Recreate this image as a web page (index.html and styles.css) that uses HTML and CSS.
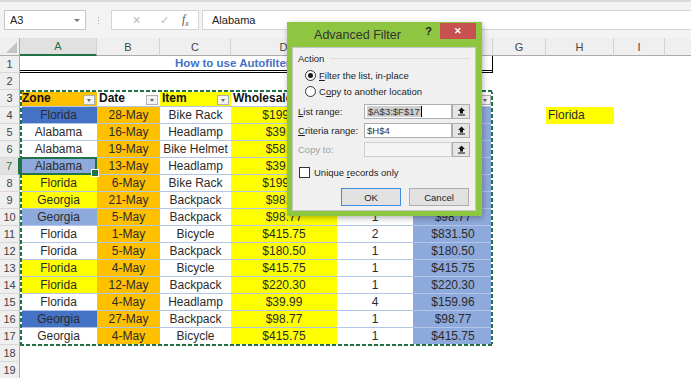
FILE: index.html
```html
<!DOCTYPE html>
<html lang="en">
<head>
    <meta charset="UTF-8">
    <title>Advanced Filter</title>
    <link rel="stylesheet" href="styles.css">
</head>
<body>
    <div class="excel">
        <div class="top-edge"></div>

        <!-- formula bar -->
        <div class="formula-bar">
            <div class="name-box"><span>A3</span><i class="name-arrow"></i></div>
            <div class="grip"><i></i><i></i><i></i></div>
            <div class="fx-box">
                <span class="fx-icon">&#x2715;</span>
                <span class="fx-icon">&#x2713;</span>
                <span class="fx-label"><i>f</i><sub>x</sub></span>
            </div>
            <div class="formula-input">Alabama</div>
        </div>

        <!-- sheet -->
        <div class="sheet">
            <div class="ch corner"></div>
            <div class="ch selected">A</div>
            <div class="ch">B</div>
            <div class="ch">C</div>
            <div class="ch">D</div>
            <div class="ch">E</div>
            <div class="ch">F</div>
            <div class="ch">G</div>
            <div class="ch">H</div>
            <div class="ch">I</div>
            <div class="ch"></div>

            <div class="rh">1</div>
            <div class="title">How to use Autofilter in Excel</div>

            <div class="rh">2</div>

            <div class="rh">3</div>
            <div class="c hdr orange"><span>Zone</span><i class="dd"></i></div>
            <div class="c hdr"><span>Date</span><i class="dd"></i></div>
            <div class="c hdr yellow"><span>Item</span><i class="dd"></i></div>
            <div class="c hdr"><span>Wholesale Price</span><i class="dd"></i></div>
            <div class="c hdr"><span>Quantity</span><i class="dd"></i></div>
            <div class="c hdr"><span>Total</span><i class="dd"></i></div>

            <div class="rh">4</div>
            <div class="c dark-blue">Florida</div>
            <div class="c orange">28-May</div>
            <div class="c">Bike Rack</div>
            <div class="c yellow">$199.99</div>
            <div class="c">1</div>
            <div class="c light-blue">$199.99</div>
            <div class="criteria">Florida</div>

            <div class="rh">5</div>
            <div class="c">Alabama</div>
            <div class="c orange">16-May</div>
            <div class="c">Headlamp</div>
            <div class="c yellow">$39.99</div>
            <div class="c">1</div>
            <div class="c light-blue">$39.99</div>

            <div class="rh">6</div>
            <div class="c">Alabama</div>
            <div class="c orange">19-May</div>
            <div class="c">Bike Helmet</div>
            <div class="c yellow">$58.99</div>
            <div class="c">1</div>
            <div class="c light-blue">$58.99</div>

            <div class="rh selected">7</div>
            <div class="c light-blue">Alabama</div>
            <div class="c orange">13-May</div>
            <div class="c">Headlamp</div>
            <div class="c yellow">$39.99</div>
            <div class="c">1</div>
            <div class="c light-blue">$39.99</div>

            <div class="rh">8</div>
            <div class="c yellow">Florida</div>
            <div class="c orange">6-May</div>
            <div class="c">Bike Rack</div>
            <div class="c yellow">$199.99</div>
            <div class="c">1</div>
            <div class="c light-blue">$199.99</div>

            <div class="rh">9</div>
            <div class="c yellow">Georgia</div>
            <div class="c orange">21-May</div>
            <div class="c">Backpack</div>
            <div class="c yellow">$98.77</div>
            <div class="c">1</div>
            <div class="c light-blue">$98.77</div>

            <div class="rh">10</div>
            <div class="c light-blue">Georgia</div>
            <div class="c orange">5-May</div>
            <div class="c">Backpack</div>
            <div class="c yellow">$98.77</div>
            <div class="c">1</div>
            <div class="c light-blue">$98.77</div>

            <div class="rh">11</div>
            <div class="c">Florida</div>
            <div class="c orange">1-May</div>
            <div class="c">Bicycle</div>
            <div class="c yellow">$415.75</div>
            <div class="c">2</div>
            <div class="c light-blue">$831.50</div>

            <div class="rh">12</div>
            <div class="c">Florida</div>
            <div class="c orange">5-May</div>
            <div class="c">Backpack</div>
            <div class="c yellow">$180.50</div>
            <div class="c">1</div>
            <div class="c light-blue">$180.50</div>

            <div class="rh">13</div>
            <div class="c yellow">Florida</div>
            <div class="c orange">4-May</div>
            <div class="c">Bicycle</div>
            <div class="c yellow">$415.75</div>
            <div class="c">1</div>
            <div class="c light-blue">$415.75</div>

            <div class="rh">14</div>
            <div class="c yellow">Florida</div>
            <div class="c orange">12-May</div>
            <div class="c">Backpack</div>
            <div class="c yellow">$220.30</div>
            <div class="c">1</div>
            <div class="c light-blue">$220.30</div>

            <div class="rh">15</div>
            <div class="c">Florida</div>
            <div class="c orange">4-May</div>
            <div class="c">Headlamp</div>
            <div class="c yellow">$39.99</div>
            <div class="c">4</div>
            <div class="c light-blue">$159.96</div>

            <div class="rh">16</div>
            <div class="c dark-blue">Georgia</div>
            <div class="c orange">27-May</div>
            <div class="c">Backpack</div>
            <div class="c yellow">$98.77</div>
            <div class="c">1</div>
            <div class="c light-blue">$98.77</div>

            <div class="rh">17</div>
            <div class="c">Georgia</div>
            <div class="c orange">4-May</div>
            <div class="c">Bicycle</div>
            <div class="c yellow">$415.75</div>
            <div class="c">1</div>
            <div class="c light-blue">$415.75</div>

            <div class="rh">18</div>
            <div class="rh">19</div>

            <!-- copy marquee and active cell -->
            <div class="marquee"></div>
            <div class="active-cell"></div>
        </div>

        <!-- Advanced Filter dialog -->
        <div class="dialog">
            <div class="dlg-title">
                <span class="dlg-caption">Advanced Filter</span>
                <span class="dlg-help">?</span>
                <span class="dlg-close">&#x2715;</span>
            </div>
            <div class="dlg-body">
                <div class="group-label">Action</div>
                <div class="radio checked"><i></i><span><u>F</u>ilter the list, in-place</span></div>
                <div class="radio"><i></i><span>C<u>o</u>py to another location</span></div>

                <div class="field first">
                    <span class="field-label"><u>L</u>ist range:</span>
                    <span class="field-input"><span class="sel">$A$3:$F$17</span><span class="caret"></span></span>
                    <span class="ref-btn"><svg width="9" height="9" viewBox="0 0 9 9"><path d="M4.5 0.5 L8 4 H6 V6.5 H3 V4 H1 Z" fill="#111"/><rect x="1" y="7.5" width="7" height="1" fill="#111"/></svg></span>
                </div>
                <div class="field">
                    <span class="field-label"><u>C</u>riteria range:</span>
                    <span class="field-input">$H$4</span>
                    <span class="ref-btn"><svg width="9" height="9" viewBox="0 0 9 9"><path d="M4.5 0.5 L8 4 H6 V6.5 H3 V4 H1 Z" fill="#111"/><rect x="1" y="7.5" width="7" height="1" fill="#111"/></svg></span>
                </div>
                <div class="field disabled">
                    <span class="field-label">Copy to:</span>
                    <span class="field-input"></span>
                    <span class="ref-btn"><svg width="9" height="9" viewBox="0 0 9 9"><path d="M4.5 0.5 L8 4 H6 V6.5 H3 V4 H1 Z" fill="#111"/><rect x="1" y="7.5" width="7" height="1" fill="#111"/></svg></span>
                </div>

                <div class="check"><i></i><span>Unique <u>r</u>ecords only</span></div>

                <div class="buttons">
                    <button class="btn default">OK</button>
                    <button class="btn">Cancel</button>
                </div>
            </div>
        </div>
    </div>
</body>
</html>
```

FILE: styles.css
```css
* {
    margin: 0;
    padding: 0;
    box-sizing: border-box;
}

body {
    font-family: "Liberation Sans", Arial, sans-serif;
    background-color: #ffffff;
    color: #222222;
    width: 691px;
    height: 378px;
    overflow: hidden;
}

.excel {
    position: relative;
    width: 691px;
    height: 378px;
    overflow: hidden;
}

.top-edge {
    height: 2px;
    background-color: #dadada;
}

/* formula bar */
.formula-bar {
    height: 36px;
    background-color: #f3f3f3;
    display: flex;
    align-items: flex-start;
    padding-top: 8px;
}

.name-box {
    width: 82px;
    height: 20px;
    margin-left: 4px;
    background-color: #ffffff;
    border: 1px solid #c6c6c6;
    display: flex;
    align-items: center;
    justify-content: space-between;
    padding: 0 5px 0 5px;
    font-size: 11px;
    color: #222;
}

.name-arrow {
    width: 0;
    height: 0;
    border-left: 3px solid transparent;
    border-right: 3px solid transparent;
    border-top: 3px solid #777;
}

.grip {
    width: 25px;
    height: 20px;
    display: flex;
    flex-direction: column;
    align-items: center;
    justify-content: center;
    gap: 2px;
}

.grip i {
    width: 1px;
    height: 1px;
    background-color: #a8a8a8;
}

.fx-box {
    width: 88px;
    height: 20px;
    background-color: #ffffff;
    border: 1px solid #d4d4d4;
    display: flex;
    align-items: center;
    padding-left: 10px;
}

.fx-icon {
    width: 28px;
    font-size: 11px;
    color: #bdbdbd;
    text-align: center;
}

.fx-label {
    margin-left: 4px;
    font-family: "Liberation Serif", serif;
    font-size: 12px;
    color: #555;
}

.fx-label sub {
    font-size: 8px;
    font-style: italic;
}

.formula-input {
    flex: 1;
    height: 20px;
    margin-left: 3px;
    background-color: #ffffff;
    border: 1px solid #d4d4d4;
    border-right: none;
    font-size: 11px;
    color: #222;
    padding-left: 9px;
    line-height: 18px;
}

/* sheet */
.sheet {
    position: relative;
    display: grid;
    grid-template-columns: 20px 77px 63px 71px 106px 76px 80px 53px 68px 51px 64px;
    grid-template-rows: 18px;
    grid-auto-rows: 17px;
}

.ch {
    background-color: #efefef;
    border-right: 1px solid #d2d2d2;
    border-bottom: 1px solid #ababab;
    font-size: 11px;
    color: #444;
    display: flex;
    align-items: center;
    justify-content: center;
}

.ch.selected {
    background-color: #e1e1e1;
    color: #217346;
    border-bottom: 2px solid #217346;
}

.ch.corner {
    position: relative;
    border-right-color: #ababab;
}

.ch.corner::after {
    content: "";
    position: absolute;
    right: 2px;
    bottom: 2px;
    border-left: 11px solid transparent;
    border-bottom: 11px solid #c3c3c3;
}

.rh {
    grid-column: 1;
    background-color: #efefef;
    border-right: 1px solid #ababab;
    border-bottom: 1px solid #d8d8d8;
    font-size: 11px;
    color: #444;
    display: flex;
    align-items: center;
    justify-content: center;
}

.rh.selected {
    background-color: #e1e1e1;
    color: #217346;
    border-right: 2px solid #217346;
}

.title {
    grid-column: span 6;
    border-right: 1px solid #000;
    border-bottom: 3px double #000;
    font-size: 11.5px;
    font-weight: bold;
    color: #4472c4;
    text-align: center;
    line-height: 15px;
}

.c {
    font-size: 12px;
    color: #2b2b2b;
    display: flex;
    align-items: center;
    justify-content: center;
    white-space: nowrap;
    overflow: hidden;
    border-bottom: 1px solid #b4c6e7;
}

.c.hdr {
    justify-content: space-between;
    font-weight: bold;
    color: #111;
    padding: 0 2px 0 2px;
}

.c.hdr span {
    overflow: hidden;
}

.dd {
    flex: none;
    width: 12px;
    height: 10px;
    margin-top: 3px;
    margin-left: 2px;
    border: 1px solid #b0b0b0;
    background-color: #f2f2f2;
    position: relative;
}

.dd::after {
    content: "";
    position: absolute;
    left: 3px;
    top: 3px;
    border-left: 2.5px solid transparent;
    border-right: 2.5px solid transparent;
    border-top: 3px solid #666;
}

.orange { background-color: #ffc000; }
.yellow { background-color: #ffff00; }
.dark-blue { background-color: #4472c4; }
.light-blue { background-color: #8ea9db; }

.criteria {
    grid-column: 9;
    background-color: #ffff00;
    font-size: 12px;
    color: #2b2b2b;
    padding-left: 2px;
    line-height: 17px;
}

.marquee {
    position: absolute;
    inset: 0 0 -1px 0;
    grid-row: 4 / 19;
    grid-column: 2 / 8;
    pointer-events: none;
    background:
        repeating-linear-gradient(90deg, #217346 0 4px, #ffffff 4px 6px) top / 100% 2px no-repeat,
        repeating-linear-gradient(90deg, #217346 0 4px, #ffffff 4px 6px) bottom / 100% 2px no-repeat,
        repeating-linear-gradient(180deg, #217346 0 4px, #ffffff 4px 6px) left / 2px 100% no-repeat,
        repeating-linear-gradient(180deg, #217346 0 4px, #ffffff 4px 6px) right / 2px 100% no-repeat;
}

.active-cell {
    position: absolute;
    inset: -1px 0 0 0;
    grid-row: 8 / 9;
    grid-column: 2 / 3;
    border: 2px solid #217346;
    pointer-events: none;
}

.active-cell::after {
    content: "";
    position: absolute;
    right: -4px;
    bottom: -4px;
    width: 6px;
    height: 6px;
    background-color: #217346;
    border: 1px solid #ffffff;
}

/* dialog */
.dialog {
    position: absolute;
    left: 287px;
    top: 22px;
    width: 195px;
    height: 194px;
    background-color: #8ec641;
    display: flex;
    flex-direction: column;
    padding: 0 6px 5px 5px;
    box-shadow: 1px 2px 6px rgba(0, 0, 0, 0.3);
    font-size: 9.5px;
    color: #1e1e1e;
}

.dlg-title {
    height: 25px;
    display: flex;
    align-items: center;
}

.dlg-caption {
    flex: 1;
    text-align: center;
    padding-left: 6px;
    font-size: 12.5px;
    color: #333333;
}

.dlg-help {
    width: 23px;
    text-align: center;
    font-size: 11px;
    font-weight: bold;
    color: #222;
    align-self: flex-start;
    margin-top: 3px;
}

.dlg-close {
    width: 36px;
    height: 16px;
    align-self: flex-start;
    margin-top: 1px;
    background-color: #c75050;
    color: #ffffff;
    font-size: 9px;
    font-weight: bold;
    text-align: center;
    line-height: 16px;
}

.dlg-body {
    flex: 1;
    background-color: #f0f0f0;
    border: 1px solid #c8c8c8;
    padding: 4px 5px 0 5px;
    display: flex;
    flex-direction: column;
}

.group-label {
    display: flex;
    align-items: center;
    height: 12px;
}

.group-label::after {
    content: "";
    flex: 1;
    height: 1px;
    margin-left: 6px;
    background-color: #dcdcdc;
}

.radio,
.check {
    display: flex;
    align-items: center;
    height: 12px;
}

.radio {
    margin-top: 5px;
    padding-left: 7px;
}

.radio + .radio {
    margin-top: 4px;
}

.radio i {
    width: 11px;
    height: 11px;
    border: 1px solid #333;
    border-radius: 50%;
    background-color: #ffffff;
    margin-right: 3px;
    position: relative;
}

.radio.checked i::after {
    content: "";
    position: absolute;
    left: 2px;
    top: 2px;
    width: 5px;
    height: 5px;
    border-radius: 50%;
    background-color: #1a1a1a;
}

.field {
    display: flex;
    align-items: center;
    height: 15px;
    margin-top: 4px;
}

.field.first {
    margin-top: 7px;
}

.field-label {
    width: 66px;
}

.field-input {
    width: 88px;
    height: 15px;
    background-color: #ffffff;
    border: 1px solid #abadb3;
    display: flex;
    align-items: center;
    padding-left: 2px;
    color: #333;
}

.field-input .sel {
    background-color: #cfcfcf;
    padding: 0 1px;
    line-height: 11px;
}

.field-input .caret {
    width: 1px;
    height: 11px;
    background-color: #000;
}

.ref-btn {
    width: 18px;
    height: 15px;
    border: 1px solid #adadad;
    background-color: #e5e5e5;
    display: flex;
    align-items: center;
    justify-content: center;
}

.field.disabled .field-label {
    color: #a0a0a0;
}

.field.disabled .field-input {
    background-color: #f4f4f4;
    border-color: #cfcfcf;
}

.check {
    margin-top: 9px;
    padding-left: 1px;
}

.check i {
    width: 11px;
    height: 11px;
    border: 1px solid #333;
    background-color: #ffffff;
    margin-right: 4px;
}

.buttons {
    display: flex;
    justify-content: flex-end;
    gap: 8px;
    margin-top: 10px;
    padding-right: 1px;
}

.btn {
    width: 60px;
    height: 18px;
    font-family: inherit;
    font-size: 9.5px;
    color: #1e1e1e;
    background-color: #e1e1e1;
    border: 1px solid #adadad;
}

.btn.default {
    border-color: #3c8fe0;
}
```
